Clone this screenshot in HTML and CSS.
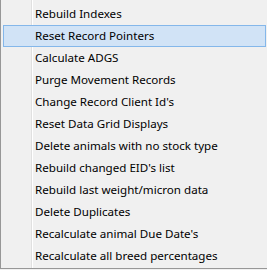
FILE: index.html
```html
<!DOCTYPE html>
<html>
<head>
<meta charset="utf-8">
<link rel="stylesheet" href="styles.css">
</head>
<body>
<div class="menu">
  <div class="item">Rebuild Indexes</div>
  <div class="item active">Reset Record Pointers</div>
  <div class="item">Calculate ADGS</div>
  <div class="item">Purge Movement Records</div>
  <div class="item">Change Record Client Id's</div>
  <div class="item">Reset Data Grid Displays</div>
  <div class="item">Delete animals with no stock type</div>
  <div class="item">Rebuild changed EID's list</div>
  <div class="item">Rebuild last weight/micron data</div>
  <div class="item">Delete Duplicates</div>
  <div class="item">Recalculate animal Due Date's</div>
  <div class="item">Recalculate all breed percentages</div>
</div>
</body>
</html>
```
FILE: styles.css
```css
html, body {
  margin: 0;
  padding: 0;
  background: #f0f0f0;
}
.menu {
  width: 263px;
  padding: 3px 1px 1px 2px;
  border: 1px solid #979797;
  border-top: none;
  background:
    linear-gradient(to right, transparent 30px, #e0e0e0 30px, #e0e0e0 31px, #ffffff 31px, #ffffff 32px, transparent 32px),
    #f0f0f0;
  font-family: "Noto Sans", "Open Sans", sans-serif;
  font-size: 11.6px;
  color: #000;
}
.item {
  height: 20px;
  line-height: 20px;
  border: 1px solid transparent;
  padding-left: 31px;
  white-space: nowrap;
}
.item.active {
  background: #d1e3f6;
  border-color: #84b7ea;
}
```
